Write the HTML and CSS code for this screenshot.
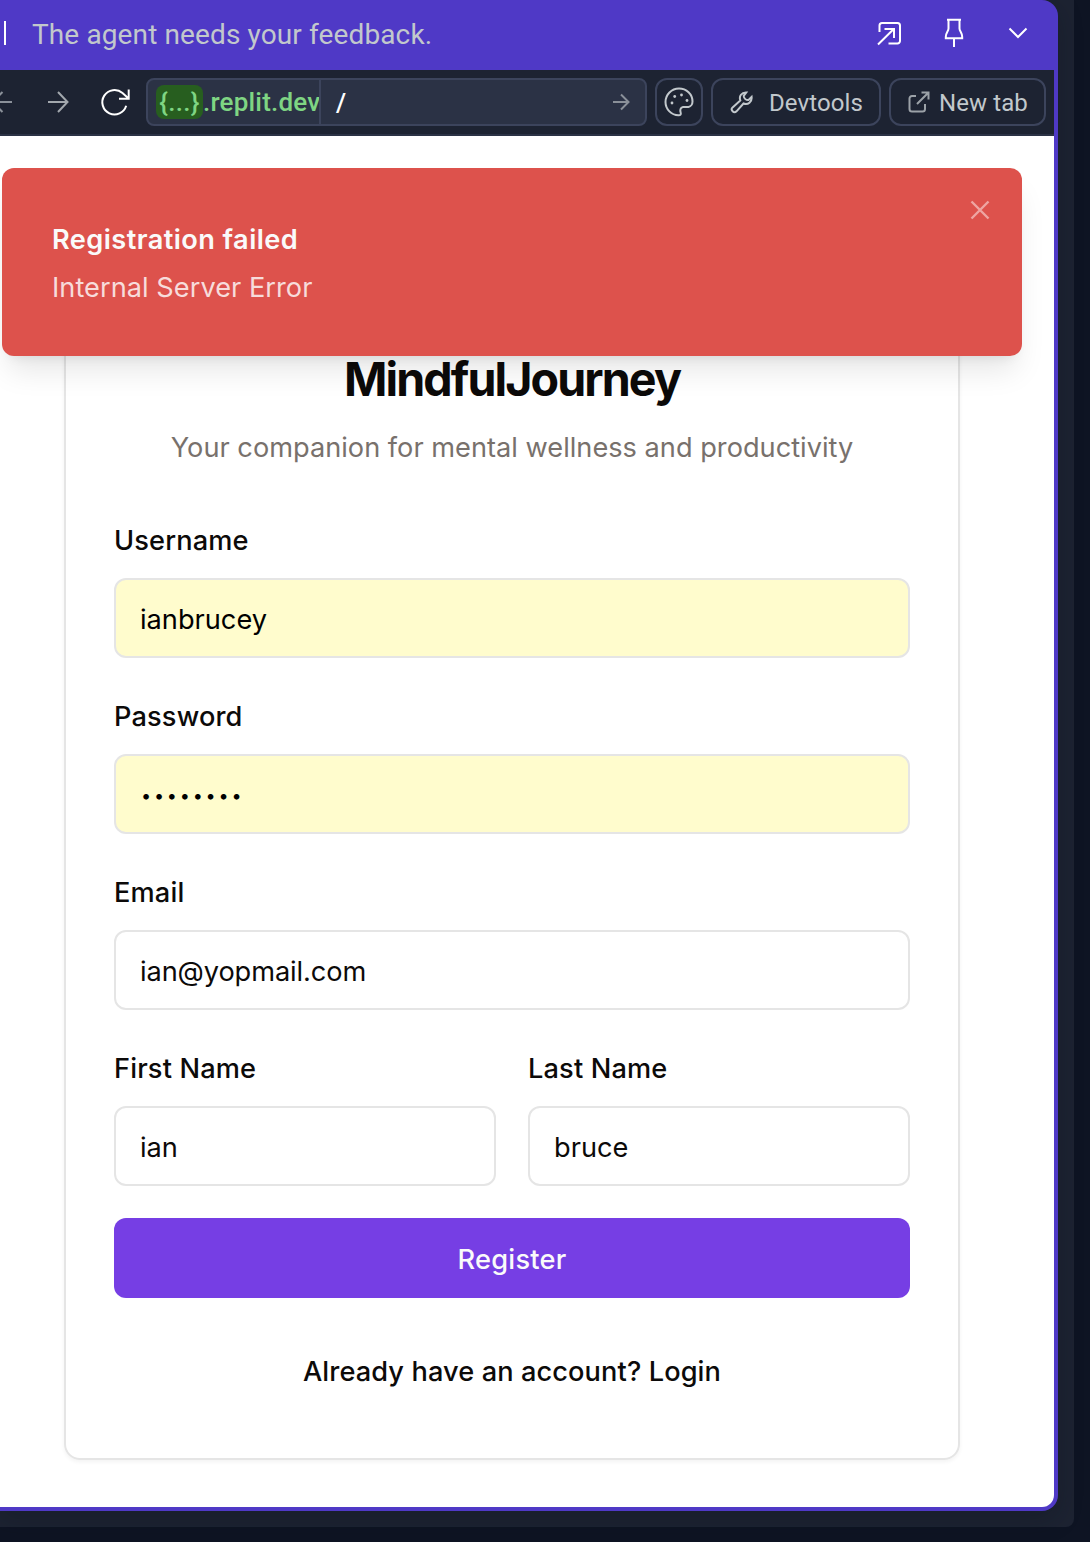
FILE: index.html
```html
<!DOCTYPE html>
<html lang="en">
<head>
<meta charset="utf-8">
<title>MindfulJourney</title>
<link rel="stylesheet" href="styles.css">
</head>
<body>
<div class="panel">
  <div class="window">
    <header class="agent-bar">
      <span class="tick"></span>
      <span class="agent-text">The agent needs your feedback.</span>
      <svg class="agent-icon" width="26" height="26" viewBox="0 0 26 26"><path d="M3.500 12V5.500a2.500 2.500 0 0 1 2.500-2.500h15.500a2.500 2.500 0 0 1 2.500 2.500v15.500a2.500 2.500 0 0 1-2.500 2.500H12.500M2 24.500 18 8.800M8.500 9h9.500v9"/></svg>
      <svg class="agent-icon pin" width="20" height="30" viewBox="0 0 20 30"><path d="M3 1.700h14M4.500 2v8.500c0 3-2.700 4-2.700 8.500v1.300h16.400V19c0-4.500-2.700-5.500-2.700-8.500V2M10 20.300V29"/></svg>
      <svg class="agent-icon chevron" width="20" height="12" viewBox="0 0 20 12"><path d="m1.500 1.500 8.500 8.500 8.500-8.500"/></svg>
    </header>
    <nav class="toolbar">
      <svg class="nav-icon back" width="14" height="22" viewBox="0 0 14 22"><path d="M-8 11h20M2.500 1-7.500 11l10 10"/></svg>
      <svg class="nav-icon forward" width="22" height="22" viewBox="0 0 22 22"><path d="M1 11h19M11 1l9.500 10-9.500 10"/></svg>
      <svg class="nav-icon reload" width="32" height="30" viewBox="0 0 32 30"><path d="M28.700 2.500v9.300h-9.700M28.300 11.300 22.500 6A12.200 12.200 0 1 0 26.200 18.800"/></svg>
      <div class="url">
        <div class="host"><span class="pill">{...}</span><span class="domain">.replit.dev</span></div>
        <div class="path">/</div>
        <svg class="go" width="18" height="18" viewBox="0 0 18 18"><path d="M1 9h15.500M9 1.500 16.500 9 9 16.500"/></svg>
      </div>
      <button class="tool palette"><svg width="30" height="30" viewBox="0 0 30 30"><path d="M15 1.500C7.500 1.500 1.500 7.500 1.500 15S7.500 28 14.500 28.300c2 .1 2.700-.8 2.200-2.500-.9-2.800-.4-5.300 2.300-5.800 1.500-.3 3.500.4 5.500 0 2.500-.4 4-3 4-5.500C28.500 7 22.500 1.500 15 1.500Z"/><g class="paint"><circle cx="10.700" cy="9.500" r="1.400"/><circle cx="17.500" cy="8" r="1.400"/><circle cx="23" cy="13.500" r="1.400"/><circle cx="8" cy="16" r="1.400"/></g></svg></button>
      <button class="tool devtools"><svg width="24" height="24" viewBox="0 0 24 24"><path d="M16.300 2.400C11.500 2.200 8.800 6.300 10.300 10.400L2.600 17.400a2.700 2.700 0 0 0 3.900 3.900L13.500 13.500C18 15.300 22.200 11.800 21.600 6.800L18.300 10.100C16.200 10.200 14 8.500 13.700 5.800Z"/></svg><span>Devtools</span></button>
      <button class="tool newtab"><svg width="22" height="22" viewBox="0 0 22 22"><path d="M8 5H4a2.500 2.500 0 0 0-2.500 2.500v10.500A2.500 2.500 0 0 0 4 20.500h10.500A2.500 2.500 0 0 0 17 18v-5M13.500 1.500h7v7M20.500 1.500 9 13"/></svg><span>New tab</span></button>
    </nav>
    <main class="page">
      <div class="toast" role="alert">
        <strong class="toast-title">Registration failed</strong>
        <span class="toast-text">Internal Server Error</span>
        <svg class="close" width="20" height="20" viewBox="0 0 20 20"><path d="m1.500 1.500 17 17M18.500 1.500l-17 17"/></svg>
      </div>
      <form class="card">
        <h1 class="title">MindfulJourney</h1>
        <p class="subtitle">Your companion for mental wellness and productivity</p>
        <label class="field"><span class="label">Username</span><span class="input filled">ianbrucey</span></label>
        <label class="field"><span class="label">Password</span><span class="input filled"><span class="dots">••••••••</span></span></label>
        <label class="field"><span class="label">Email</span><span class="input email">ian@yopmail.com</span></label>
        <div class="names">
          <label class="field"><span class="label">First Name</span><span class="input">ian</span></label>
          <label class="field"><span class="label">Last Name</span><span class="input">bruce</span></label>
        </div>
        <button type="button" class="register">Register</button>
        <a class="login">Already have an account? Login</a>
      </form>
    </main>
  </div>
</div>
</body>
</html>
```
FILE: styles.css
```css
* { box-sizing: border-box; }
body { margin: 0; width: 1090px; height: 1542px; overflow: hidden; background: #0e1423; font-family: Inter, sans-serif; font-size: 27.2px; color: #0c0a09; }
svg { fill: none; stroke: currentColor; stroke-width: 2; flex: none; display: block; }
button { font: inherit; margin: 0; padding: 0; }

/* Workspace pane and the browser window in it */
.panel { width: 1074px; height: 1527px; background: #1d2332; border-radius: 0 0 8px 0; }
.window { width: 1058px; height: 1511px; background: #4f39c6; border-radius: 0 16px 16px 0; padding: 0 4px 4px 0; overflow: hidden; box-shadow: 0 8px 24px rgba(10, 16, 28, .3); }
.agent-bar { height: 70px; width: 1058px; display: flex; align-items: center; padding: 0 30px 4px 4px; color: #fff; font-family: Roboto, sans-serif; font-size: 28px; }
.tick { width: 2px; height: 24px; background: #fff; margin-right: 26px; }
.agent-text { flex: 1; color: #c2c8cc; padding-top: 2px; letter-spacing: .12px; }
.pin { margin: 0 44px 0 42px; }

/* Address bar */
.toolbar { height: 66px; background: #1d2332; border-bottom: 2px solid #2b3245; display: flex; align-items: center; padding-right: 8px; font-family: Roboto, sans-serif; font-size: 24px; }
.nav-icon.back { color: #8a9099; margin-right: 33px; }
.forward { color: #a2a7ad; margin-right: 31px; }
.reload { color: #fff; margin-right: 14px; }
.url { width: 501px; height: 48px; margin-right: 8px; border: 2px solid #3c445c; border-radius: 8px; background: #2b3245; display: flex; align-items: center; font-size: 26px; }
.host { width: 173px; height: 44px; padding-left: 8px; display: flex; align-items: center; color: #7fd583; border-right: 2px solid #3c445c; overflow: hidden; white-space: nowrap; font-weight: 500; }
.pill { background: #275e1f; border-radius: 8px; height: 34px; line-height: 34px; width: 47px; text-align: center; flex: none; letter-spacing: .3px; }
.domain { letter-spacing: .2px; }
.path { color: #fff; flex: 1; padding: 2px 0 0 15px; font-weight: 500; }
.go { color: #8a9099; margin-right: 15px; }
.tool { height: 48px; border: 2px solid #3c445c; border-radius: 12px; background: none; color: #c2c8cc; display: flex; align-items: center; letter-spacing: .1px; }
.tool span { padding-top: 2px; }
.palette { width: 48px; justify-content: center; margin-right: 8px; }
.paint { fill: currentColor; stroke: none; }
.devtools { width: 170px; padding-left: 17px; gap: 15px; margin-right: 8px; }
.newtab { width: 157px; padding-left: 17px; gap: 9px; }
.newtab svg { color: #9ca2a8; }

/* Previewed app */
.page { position: relative; height: 1371px; background: #fff; border-radius: 0 0 12px 0; padding: 169px 94px 47px 64px; }
.toast { position: absolute; left: 2px; top: 32px; width: 1020px; height: 188px; border-radius: 12px; background: #dd524c; color: #fafafa; padding: 52px 50px; display: flex; flex-direction: column; gap: 8px; box-shadow: 0 20px 30px -6px rgba(0,0,0,.1), 0 8px 12px -8px rgba(0,0,0,.1); }
.toast-title { font-weight: 600; line-height: 40px; letter-spacing: .43px; }
.toast-text { color: #f7dcdb; line-height: 40px; letter-spacing: .03px; }
.close { position: absolute; right: 32px; top: 32px; color: #eea5a2; stroke-width: 2.4; }
.card { height: 1155px; border: 2px solid #e5e5e5; border-radius: 16px; padding: 48px; display: flex; flex-direction: column; box-shadow: 0 2px 4px rgba(0,0,0,.05); }
.title { margin: 0; font-size: 46.6px; line-height: 48px; font-weight: 700; text-align: center; letter-spacing: -1.9px; }
.subtitle { margin: 25px 0 58px; line-height: 40px; text-align: center; color: #78716c; white-space: nowrap; }
.field { display: block; margin-bottom: 44px; }
.label { display: block; height: 28px; line-height: 30px; font-weight: 500; margin-bottom: 24px; letter-spacing: .15px; }
.input { display: flex; align-items: center; height: 80px; border: 2px solid #e5e5e5; border-radius: 12px; padding: 2px 24px 0; }
.email { letter-spacing: -.1px; }
.filled { background: #fffccd; color: #000; }
.dots { font-size: 18px; letter-spacing: 2.8px; padding: 1px 0 0 1px; }
.names { display: grid; grid-template-columns: 1fr 1fr; gap: 32px; }
.names .field { margin-bottom: 32px; }
.register { height: 80px; border: 0; border-radius: 12px; background: #763ee4; color: #fafafa; font-weight: 500; padding-top: 2px; letter-spacing: .25px; }
.login { margin-top: 54px; line-height: 40px; text-align: center; font-weight: 500; letter-spacing: .1px; }
```
